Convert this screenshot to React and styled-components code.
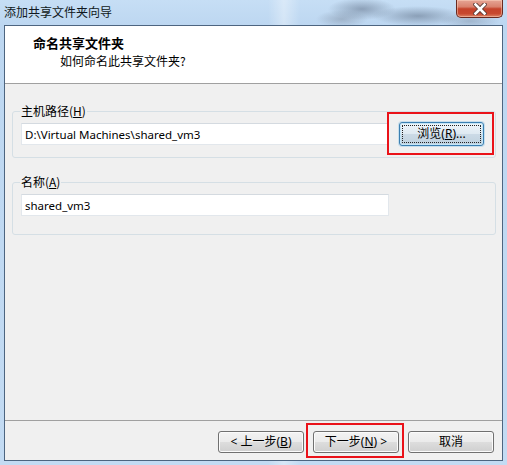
import React from "react";
import styled, { createGlobalStyle } from "styled-components";

const Global = createGlobalStyle`
  html, body { margin: 0; padding: 0; background: #c3dbf3; }
  body { font-family: "Noto Sans", "Noto Sans CJK SC", sans-serif; font-size: 12px; color: #000; }
  * { box-sizing: border-box; }
`;

const Window = styled.div`
  width: 507px;
  height: 465px;
  display: flex;
  flex-direction: column;
  padding: 0 4px 4px 4px;
  background:
    radial-gradient(ellipse 34px 11px at 362px 9px, rgba(105,122,145,0.6), transparent),
    radial-gradient(ellipse 46px 10px at 418px 16px, rgba(95,112,135,0.55), transparent),
    radial-gradient(ellipse 26px 9px at 342px 19px, rgba(125,140,160,0.5), transparent),
    radial-gradient(ellipse 30px 8px at 470px 21px, rgba(115,130,150,0.4), transparent),
    linear-gradient(90deg, transparent 268px, rgba(255,255,255,0.35) 284px, transparent 300px),
    linear-gradient(180deg, #c6def5 0px, #bdd7f1 25px, #c3dbf3 100%);
`;

const TitleBar = styled.div`
  height: 25px;
  flex: none;
  display: flex;
  justify-content: space-between;
  align-items: flex-start;
`;

const Title = styled.div`
  font-family: "Noto Sans CJK SC", sans-serif;
  font-size: 12px;
  line-height: 16px;
  padding-top: 4px;
  color: #101820;
`;

const CloseButton = styled.div`
  width: 47px;
  height: 18px;
  display: flex;
  align-items: center;
  justify-content: center;
  border: 1px solid #6a2a20;
  border-top: none;
  border-radius: 0 0 5px 5px;
  background: linear-gradient(180deg, #e6a595 0%, #d9826e 40%, #c5432b 52%, #c8492f 80%, #dd8466 100%);
  box-shadow: inset 0 0 0 1px rgba(255, 220, 200, 0.45);
`;

const Client = styled.div`
  flex: 1;
  display: flex;
  flex-direction: column;
  border: 1px solid #4d6580;
  background: #f0f0f0;
  min-height: 0;
`;

const Header = styled.div`
  height: 58px;
  flex: none;
  background: #fff;
  border-bottom: 1px solid #a0a0a0;
  padding: 8px 0 0 28px;
  font-family: "Noto Sans CJK SC", sans-serif;
`;

const HeaderTitle = styled.div`
  font-size: 13px;
  font-weight: bold;
  line-height: 18px;
`;

const HeaderSub = styled.div`
  font-size: 12px;
  line-height: 18px;
  padding-left: 27px;
`;

const Body = styled.div`
  flex: 1;
  padding: 19px 6px 0 7px;
  display: flex;
  flex-direction: column;
`;

const Group = styled.fieldset`
  margin: ${(p) => p.$top || 0}px 0 0 0;
  border: 1px solid #d5dfe5;
  border-radius: 3px;
  padding: 3px 8px ${(p) => p.$bottom}px 8px;
  min-width: 0;
`;

const Legend = styled.legend`
  padding: 0 1px;
  margin-left: -1px;
  font-family: "Noto Sans CJK SC", sans-serif;
  font-size: 12px;
  line-height: 16px;
`;

const Row = styled.div`
  display: flex;
  align-items: center;
`;

const TextBox = styled.input`
  width: 368px;
  height: 22px;
  padding: 0 3px;
  margin: ${(p) => (p.$shift ? "1px 0 0 0" : "0")};
  border: 1px solid #e2e7ec;
  border-top-color: #d4dae0;
  background: #fff;
  font-family: "Noto Sans", "Noto Sans CJK SC", sans-serif;
  font-size: 11.5px;
  color: #000;
  outline: none;
`;

const Marked = styled.span`
  position: relative;
  display: inline-flex;
  margin-left: ${(p) => p.$ml || 0}px;
  &::after {
    content: "";
    position: absolute;
    top: ${(p) => p.$t}px;
    left: ${(p) => p.$l}px;
    right: ${(p) => p.$r}px;
    bottom: ${(p) => p.$b}px;
    border: 2px solid #ea1219;
    pointer-events: none;
  }
`;

const Button = styled.button`
  position: relative;
  width: ${(p) => p.$w || 86}px;
  height: ${(p) => p.$h || 22}px;
  padding: 0;
  border: 1px solid ${(p) => (p.$focused ? "#3c7fb1" : "#707070")};
  border-radius: 3px;
  background: ${(p) =>
    p.$focused
      ? "linear-gradient(180deg, #eef5fa 0%, #dfeaf2 48%, #cbdae6 52%, #bfd1de 100%)"
      : "linear-gradient(180deg, #f3f3f3 0%, #ebebeb 48%, #dddddd 52%, #cfcfcf 100%)"};
  box-shadow: ${(p) =>
    p.$focused
      ? "inset 0 0 0 1px #c4e5f6, 0 0 0 1px rgba(120,190,230,0.35)"
      : "inset 0 0 0 1px #fbfbfb"};
  font-family: "Noto Sans", "Noto Sans CJK SC", sans-serif;
  font-size: 12px;
  line-height: 16px;
  color: #000;
  display: flex;
  align-items: center;
  justify-content: center;
  ${(p) =>
    p.$focused &&
    `
    &::after {
      content: "";
      position: absolute;
      inset: 2px;
      border: 1px dotted #222;
      border-radius: 1px;
    }
  `}
`;

const Footer = styled.div`
  height: 40px;
  flex: none;
  border-top: 1px solid #a0a0a0;
  padding: 10px 8px 0 0;
  display: flex;
  justify-content: flex-end;
  gap: 9px;
  align-items: flex-start;
`;

export default function App() {
  return (
    <>
      <Global />
      <Window>
        <TitleBar>
          <Title>添加共享文件夹向导</Title>
          <CloseButton>
            <svg width="14" height="12" viewBox="0 0 14 12">
              <path d="M2.5 1.5 L11.5 10.5 M11.5 1.5 L2.5 10.5" stroke="#5a3a34" strokeWidth="4.4" strokeLinecap="square" fill="none" />
              <path d="M2.5 1.5 L11.5 10.5 M11.5 1.5 L2.5 10.5" stroke="#ffffff" strokeWidth="2.6" strokeLinecap="square" fill="none" />
            </svg>
          </CloseButton>
        </TitleBar>
        <Client>
          <Header>
            <HeaderTitle>命名共享文件夹</HeaderTitle>
            <HeaderSub>如何命名此共享文件夹?</HeaderSub>
          </Header>
          <Body>
            <Group $bottom={11}>
              <Legend>
                主机路径(<u>H</u>)
              </Legend>
              <Row>
                <TextBox readOnly defaultValue="D:\Virtual Machines\shared_vm3" />
                <Marked $ml={10} $t={-10} $l={-12} $r={-10} $b={-9}>
                  <Button $focused $w={85} $h={24}>
                    浏览(<u>R</u>)...
                  </Button>
                </Marked>
              </Row>
            </Group>
            <Group $top={16} $bottom={18}>
              <Legend>
                名称(<u>A</u>)
              </Legend>
              <Row>
                <TextBox $shift readOnly defaultValue="shared_vm3" />
              </Row>
            </Group>
          </Body>
          <Footer>
            <Button>
              &lt; 上一步(<u>B</u>)
            </Button>
            <Marked $t={-8} $l={-7} $r={-5} $b={-5}>
              <Button>
                下一步(<u>N</u>) &gt;
              </Button>
            </Marked>
            <Button>取消</Button>
          </Footer>
        </Client>
      </Window>
    </>
  );
}
